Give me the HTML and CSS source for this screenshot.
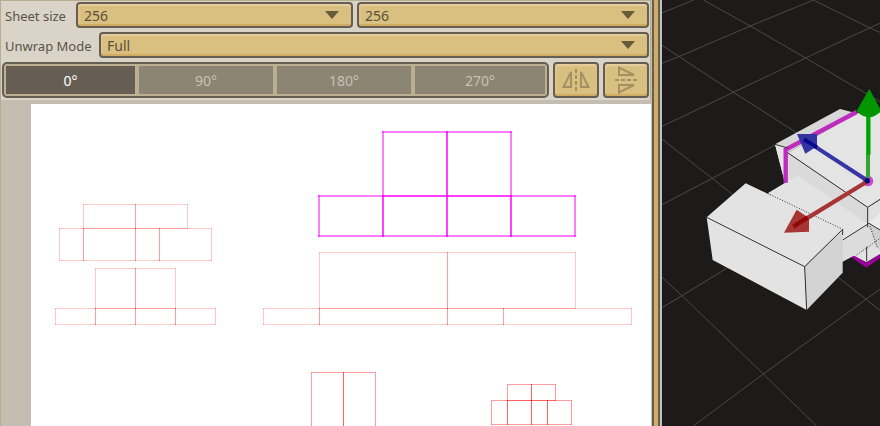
FILE: index.html
```html
<!DOCTYPE html>
<html lang="en">
<head>
<meta charset="utf-8">
<title>Texture Sheet</title>
<link rel="stylesheet" href="styles.css">
</head>
<body>
<main class="editor">
  <section class="panel">
    <form class="settings">
      <div class="row row-size">
        <label for="sheet-width">Sheet size</label>
        <div class="dropdown"><select id="sheet-width"><option>256</option></select></div>
        <div class="dropdown"><select id="sheet-height" aria-label="Sheet height"><option>256</option></select></div>
      </div>
      <div class="row row-mode">
        <label for="unwrap-mode">Unwrap Mode</label>
        <div class="dropdown"><select id="unwrap-mode"><option>Full</option></select></div>
      </div>
      <div class="row row-tools">
        <div class="segments">
          <button type="button" class="segment active">0°</button>
          <button type="button" class="segment">90°</button>
          <button type="button" class="segment">180°</button>
          <button type="button" class="segment">270°</button>
        </div>
        <button type="button" class="tool" aria-label="Mirror horizontally">
          <svg width="28" height="28" viewBox="0 0 28 28"><path d="M9 6V21H1.500Z M19 6V21H26.500Z"/><path d="M14 3V26" stroke-dasharray="4 2"/></svg>
        </button>
        <button type="button" class="tool" aria-label="Mirror vertically">
          <svg width="28" height="28" viewBox="0 0 28 28"><path d="M7 1.500V9H22Z M7 26.500V19H22Z"/><path d="M3 14H26" stroke-dasharray="4 2"/></svg>
        </button>
      </div>
    </form>
    <div class="sheet-area">
      <svg class="sheet" role="img" aria-label="Unwrapped texture sheet">
        <defs>
          <marker id="dot" markerUnits="userSpaceOnUse" markerWidth="1" markerHeight="1" refX=".5" refY=".5"><rect class="corner" width="1" height="1"/></marker>
          <marker id="dot-selected" markerUnits="userSpaceOnUse" markerWidth="2" markerHeight="2" refX="1" refY="1"><rect class="corner-selected" width="2" height="2"/></marker>
        </defs>
        <g class="faces" transform="translate(-30.5 -103.5)">
          <path d="M83 204h52v24h-52z"/><path d="M135 204h52v24h-52z"/>
          <path d="M59 228h24v32h-24z"/><path d="M83 228h52v32h-52z"/><path d="M135 228h24v32h-24z"/><path d="M159 228h52v32h-52z"/>
          <path d="M95 268h40v40h-40z"/><path d="M135 268h40v40h-40z"/>
          <path d="M55 308h40v16h-40z"/><path d="M95 308h40v16h-40z"/><path d="M135 308h40v16h-40z"/><path d="M175 308h40v16h-40z"/>
          <path d="M319 252h128v56h-128z"/><path d="M447 252h128v56h-128z"/>
          <path d="M263 308h56v16h-56z"/><path d="M319 308h128v16h-128z"/><path d="M447 308h56v16h-56z"/><path d="M503 308h128v16h-128z"/>
        </g>
        <g class="faces shared" transform="translate(-30.5 -103.5)">
          <path d="M311 372h32v64h-32z"/><path d="M343 372h32v64h-32z"/>
          <path d="M507 384h24v16h-24z"/><path d="M531 384h24v16h-24z"/>
          <path d="M491 400h16v24h-16z"/><path d="M507 400h24v24h-24z"/><path d="M531 400h16v24h-16z"/><path d="M547 400h24v24h-24z"/>
        </g>
        <g class="faces selected" transform="translate(-31 -104)">
          <path d="M383 132h64v64h-64z"/><path d="M447 132h64v64h-64z"/>
          <path d="M319 196h64v40h-64z"/><path d="M383 196h64v40h-64z"/><path d="M447 196h64v40h-64z"/><path d="M511 196h64v40h-64z"/>
        </g>
      </svg>
    </div>
  </section>
  <div class="splitter"></div>
  <section class="viewport">
    <svg class="scene" viewBox="66 0 654 1278" preserveAspectRatio="xMinYMin slice" role="img" aria-label="3D model view">
      <g class="floor">
        <path d="M66 136L279 276 471 399M190 0L331 78 497 174 720 305M520 0L688 83 720 97M66 417L215 534 678 898 720 931M66 832L126 887 370 1122 530 1278"/>
        <path d="M66 39L160 0M66 190L119 169 331 78 520 0M66 379L280 277 497 174 688 84 720 70M66 614L215 536 405 435M66 923L126 887 260 805M160 1278L370 1122 678 898 720 868"/>
      </g>
      <path d="M636 766L679 796 722 766" fill="none" stroke="#990099" stroke-width="12"/>
      <path d="M640 766L680 735 720 700V762L679 787Z" fill="#e2e2e2"/>
      <path d="M405 433L600 327 650 340 443 458 434 545Z" fill="#d7d7d7"/>
      <path d="M405 433L443 443V545H434Z" fill="#e4e4e4"/>
      <path d="M443 458L650 340 720 330V600L683 622Z" fill="#e4e4e4"/>
      <path d="M443 458L683 622V690L443 560Z" fill="#dadada"/>
      <path d="M683 622L720 600V700L683 680Z" fill="#e0e0e0"/>
      <path d="M383 580L473 526 683 672 600 730Z" fill="#e3e3e3"/>
      <path d="M600 725L683 672 718 735 640 768 600 790Z" fill="#dcdcdc"/>
      <path d="M683 672L720 640V690Z" fill="#ebebeb"/>
      <path d="M686 670L720 690V750L708 740Z" fill="#cfcfcf"/>
      <path d="M437 548V449L650 336" fill="none" stroke="#be2bbe" stroke-width="13"/>
      <path d="M200 652L317 550 608 688 494 800 500 930 218 780Z" fill="#e3e3e3"/>
      <path d="M494 800L608 688V818L500 930Z" fill="#d3d3d3"/>
      <g class="edges">
        <path d="M200 652L494 800 608 688V705M494 800L500 930M443 458L683 622 720 598M683 622V682M608 720L687 670 720 690M405 433L443 444M680 740V784"/>
        <path d="M383 580L608 688M650 765L720 715M690 678L713 745" stroke-dasharray="3 5"/>
      </g>
      <circle cx="684" cy="543" r="16" fill="#c94bc9"/>
      <path d="M684 543L460 680" stroke="#a83535" stroke-width="13"/>
      <path d="M470 629L507 654V695L432 698Z" fill="#a83535"/>
      <path d="M503 652L460 680" stroke="#900909" stroke-width="13"/>
      <path d="M684 543L492 418" stroke="#3535a6" stroke-width="12"/>
      <path d="M471 402H531V439L496 461Z" fill="#3535a0"/>
      <path d="M531 442L492 418" stroke="#08088e" stroke-width="12"/>
      <circle cx="682" cy="542" r="8" fill="#08086e"/>
      <path d="M684 533V460" stroke="#35a635" stroke-width="12"/>
      <path d="M685 464V345" stroke="#00a500" stroke-width="13"/>
      <path d="M688 267L724 333Q688 370 649 334Z" fill="#009600"/>
    </svg>
  </section>
</main>
</body>
</html>
```
FILE: styles.css
```css
* { box-sizing: border-box; }

body {
  margin: 0;
  background: #1c1b1a;
  color: #59544a;
  font: 14px/20px "Noto Sans", "Open Sans", sans-serif;
}

.editor {
  display: grid;
  grid-template-columns: 652fr 10px 218fr;
  height: 100vh;
  overflow: hidden;
}

.panel {
  display: flex;
  flex-direction: column;
  min-width: 0;
  min-height: 0;
  border-left: 1px solid #b9ad90;
  background: #c5bcb2;
}

.settings {
  display: flex;
  flex-direction: column;
  gap: 4px;
  padding: 1px 1px 2px;
  border: solid #b9ad90;
  border-width: 1px 1px 0 0;
  margin-right: 1px;
  background: #dad3c7;
}

.row { display: grid; gap: 4px; align-items: center; }
.row-size { grid-template-columns: 70px 277fr 292fr; }
.row-mode { grid-template-columns: 93px 1fr; }
.row-tools { grid-template-columns: 1fr 46px 46px; }
.row label {
  padding: 2px 0 0 3px;
  font-size: 13px;
  white-space: nowrap;
}

.dropdown { position: relative; }
.dropdown::after {
  content: "";
  position: absolute;
  top: 9px;
  right: 14px;
  width: 14px;
  height: 8px;
  background: #665b39;
  clip-path: polygon(0 0, 100% 0, 50% 100%);
  pointer-events: none;
}

select {
  display: block;
  width: 100%;
  height: 26px;
  margin: 0;
  padding: 2px 6px 0;
  appearance: none;
  border: 2px solid #665e50;
  border-radius: 4px;
  background: #d9bf80;
  box-shadow: inset 0 2px #e5cda0, inset 0 -2px #d0ad62, inset 2px 0 #dfc58c;
  color: #59503a;
  font: inherit;
}

.segments {
  display: grid;
  grid-template-columns: 129fr 134fr 134fr 130fr;
  gap: 4px;
  height: 36px;
  padding: 2px;
  border: 2px solid #665e50;
  border-radius: 5px;
  background: #bbb094;
}

.segment {
  margin: 0;
  padding: 2px 0 0;
  border: 0;
  background: #8c8573;
  color: #c8c1b6;
  font: inherit;
}
.segment.active { background: #665e52; color: #fff; }

.tool {
  display: grid;
  place-items: center;
  height: 36px;
  padding: 0;
  border: 2px solid #665e50;
  border-radius: 4px;
  background: #d9bf80;
  box-shadow: inset 0 2px #e5cda0, inset 0 -2px #d0ad62, inset 2px 0 #dfc58c;
}
.tool svg { fill: none; stroke: #a39163; stroke-width: 2; }

.sheet-area {
  display: flex;
  flex: 1;
  min-height: 0;
  padding: 4px 1px 0 30px;
}
.sheet { display: block; width: 100%; height: 100%; background: #fff; }

.faces { fill: none; stroke: #f00; stroke-opacity: .21; shape-rendering: crispEdges; }
.faces path { marker-start: url(#dot); marker-mid: url(#dot); }
.shared { stroke-opacity: .38; }
.selected { stroke: #f0f; stroke-opacity: .5; stroke-width: 2; }
.selected path { marker-start: url(#dot-selected); marker-mid: url(#dot-selected); }
.corner { fill: #f00; fill-opacity: .2; stroke: none; }
.corner-selected { fill: #f0f; fill-opacity: .5; stroke: none; }

.splitter {
  border: solid #665e50;
  border-width: 0 2px;
  margin-right: 2px;
  background: #d0ad66;
  box-shadow: 2px 0 #c3c1bd;
}

.viewport { min-width: 0; min-height: 0; }
.scene { display: block; width: 100%; height: 100%; }
.floor { fill: none; stroke: #4b4a49; stroke-width: 3; }
.edges { fill: none; stroke: #333; stroke-width: 3; }
```
